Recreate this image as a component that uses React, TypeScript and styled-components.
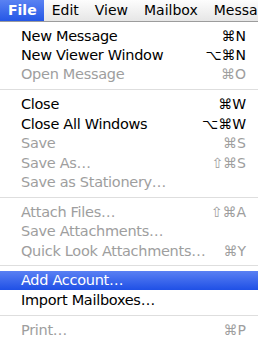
import styled, { createGlobalStyle } from 'styled-components'

const GlobalStyle = createGlobalStyle`
  html, body {
    margin: 0;
    padding: 0;
    background: #ffffff;
  }
  body {
    font-family: "DejaVu Sans", Verdana, sans-serif;
    width: 258px;
    height: 344px;
    overflow: hidden;
  }
`;

type Entry =
  | { kind: 'item'; label: string; keys?: string; disabled?: boolean; active?: boolean }
  | { kind: 'sep' };

const entries: Entry[] = [
  { kind: 'item', label: 'New Message', keys: '⌘N' },
  { kind: 'item', label: 'New Viewer Window', keys: '⌥⌘N' },
  { kind: 'item', label: 'Open Message', keys: '⌘O', disabled: true },
  { kind: 'sep' },
  { kind: 'item', label: 'Close', keys: '⌘W' },
  { kind: 'item', label: 'Close All Windows', keys: '⌥⌘W' },
  { kind: 'item', label: 'Save', keys: '⌘S', disabled: true },
  { kind: 'item', label: 'Save As…', keys: '⇧⌘S', disabled: true },
  { kind: 'item', label: 'Save as Stationery…', disabled: true },
  { kind: 'sep' },
  { kind: 'item', label: 'Attach Files…', keys: '⇧⌘A', disabled: true },
  { kind: 'item', label: 'Save Attachments…', disabled: true },
  { kind: 'item', label: 'Quick Look Attachments…', keys: '⌘Y', disabled: true },
  { kind: 'sep' },
  { kind: 'item', label: 'Add Account…', active: true },
  { kind: 'item', label: 'Import Mailboxes…' },
  { kind: 'sep' },
  { kind: 'item', label: 'Print…', keys: '⌘P', disabled: true },
];

function App() {
  return (
    <>
      <GlobalStyle />
      <MenuBar>
        <BarItem $open>File</BarItem>
        <BarItem>Edit</BarItem>
        <BarItem>View</BarItem>
        <BarItem>Mailbox</BarItem>
        <BarItem>Message</BarItem>
      </MenuBar>
      <Menu>
        {entries.map((e, i) =>
          e.kind === 'sep' ? (
            <Separator key={i} />
          ) : (
            <Row key={i} $disabled={e.disabled} $active={e.active}>
              <Label>{e.label}</Label>
              {e.keys && <Keys>{e.keys}</Keys>}
            </Row>
          )
        )}
      </Menu>
    </>
  )
}

const MenuBar = styled.div`
  display: flex;
  height: 21px;
  border-bottom: 1px solid #9c9c9c;
  background: linear-gradient(#fdfdfd, #e6e6e6);
  white-space: nowrap;
  overflow: hidden;
`;

const BarItem = styled.div<{ $open?: boolean }>`
  padding: ${(p) => (p.$open ? '0 7px 0 8px' : '0 8px')};
  line-height: 21px;
  font-size: 14px;
  font-weight: ${(p) => (p.$open ? 700 : 400)};
  color: ${(p) => (p.$open ? '#ffffff' : '#000000')};
  background: ${(p) => (p.$open ? 'linear-gradient(#5a82f2, #2457e6)' : 'transparent')};
`;

const Menu = styled.div`
  padding: 4px 0 6px;
  background: #ffffff;
  border-radius: 0 0 6px 6px;
`;

const Row = styled.div<{ $disabled?: boolean; $active?: boolean }>`
  display: flex;
  justify-content: space-between;
  align-items: center;
  height: 19.4px;
  padding: 0 12px 0 21px;
  font-size: 14.5px;
  letter-spacing: -0.3px;
  color: ${(p) => (p.$active ? '#ffffff' : p.$disabled ? '#9e9e9e' : '#000000')};
  background: ${(p) => (p.$active ? 'linear-gradient(#5a80f3, #1f50e6)' : 'transparent')};
`;

const Label = styled.span`
  white-space: nowrap;
`;

const Keys = styled.span`
  white-space: nowrap;
  font-size: 14px;
  letter-spacing: 0;
`;

const Separator = styled.div`
  height: 1px;
  margin: 5px 0 4.5px;
  background: #dedede;
`;

export default App
